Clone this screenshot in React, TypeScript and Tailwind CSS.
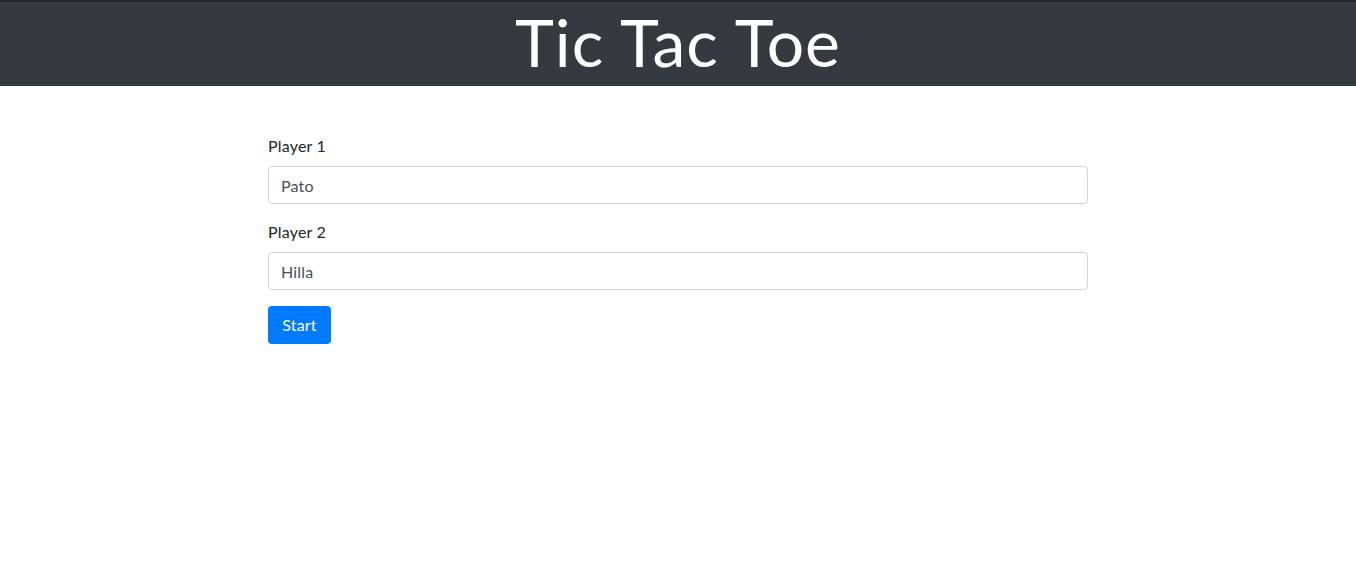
export default function App() {
  return (
    <div className="min-h-screen bg-white font-['Lato','Noto_Sans',sans-serif]">
      <header className="h-[86px] bg-[#343a40] border-t-2 border-[#23272b] flex items-center justify-center pb-[5px]">
        <h1 className="text-white text-[66px] leading-none font-normal tracking-[1px]">Tic Tac Toe</h1>
      </header>

      <div className="w-[820px] mx-auto pt-[48px]">
        <div className="mb-4">
          <label htmlFor="p1" className="block mb-2 text-base leading-6 text-[#212529] tracking-[0.2px]">Player 1</label>
          <input
            id="p1"
            defaultValue="Pato"
            className="block w-full h-[38px] px-3 border border-[#ced4da] rounded text-base text-[#495057] outline-none tracking-[0.2px]"
          />
        </div>
        <div className="mb-4">
          <label htmlFor="p2" className="block mb-2 text-base leading-6 text-[#212529] tracking-[0.2px]">Player 2</label>
          <input
            id="p2"
            defaultValue="Hilla"
            className="block w-full h-[38px] px-3 border border-[#ced4da] rounded text-base text-[#495057] outline-none tracking-[0.2px]"
          />
        </div>
        <button className="h-[38px] w-[63px] bg-[#007bff] text-white text-base rounded tracking-[0.2px]">Start</button>
      </div>
    </div>
  );
}
